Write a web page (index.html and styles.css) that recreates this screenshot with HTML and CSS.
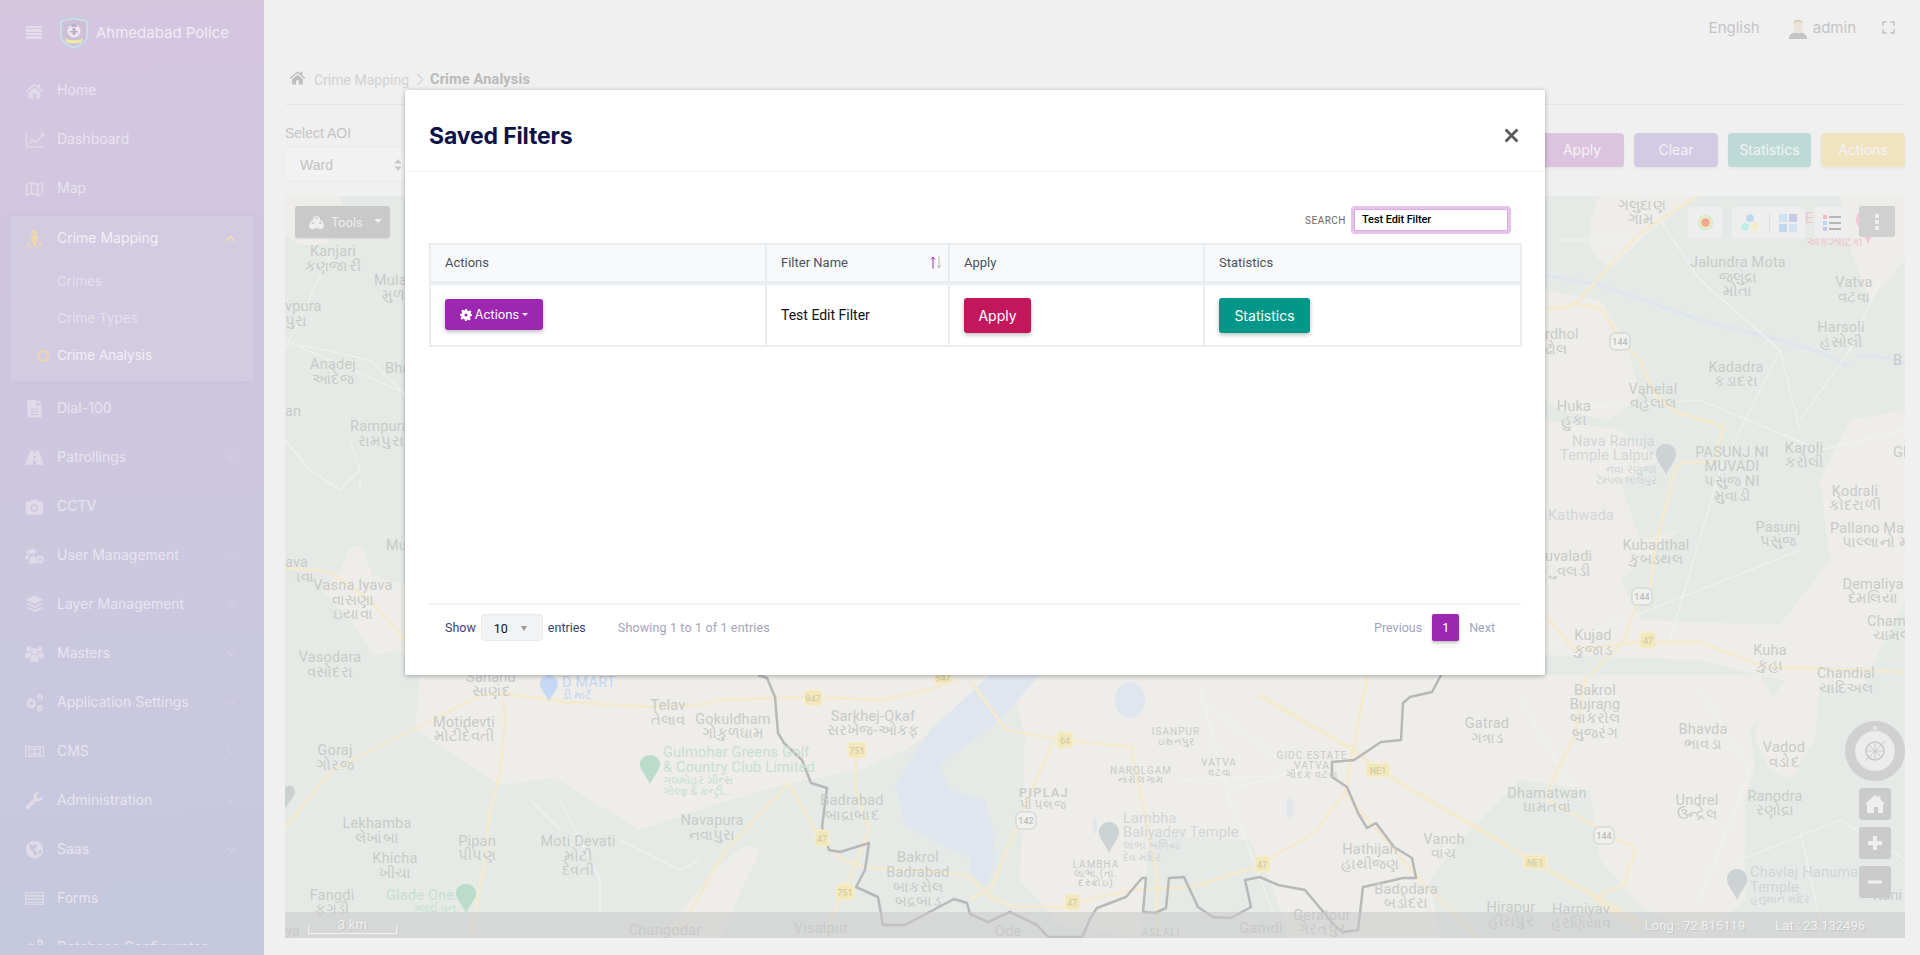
FILE: index.html
```html
<!DOCTYPE html>
<html lang="en">
<head>
<meta charset="utf-8">
<title>Crime Analysis</title>
<link rel="stylesheet" href="styles.css">
</head>
<body>
<svg class="sprite" aria-hidden="true">
  <symbol id="i-home" viewBox="0 0 24 24"><path d="M12 3 1 12.500l1.300 1.500L12 5.800l9.700 8.200 1.300-1.500-4-3.400V4h-3v2.600zM4.500 14.500V22h5.500v-6h4v6h5.500v-7.500L12 8.200z"/></symbol>
  <symbol id="i-chart" viewBox="0 0 24 24"><path d="M1 3h1.600v17.400H24V22H1z"/><path d="M4 17l6-6 4 3 7-8-2-1.500 5-1.500v6l-1.700-1.800L14 17l-4-3-5 5z"/></symbol>
  <symbol id="i-map" viewBox="0 0 24 24"><path d="M1 6l7-3 8 3 7-3v16l-7 3-8-3-7 3zM3 7.300v11.500l4-1.700V5.600zM9 5.600v11.500l6 2.200V7.800zM17 7.800v11.500l4-1.700V5.600z" fill-rule="evenodd"/></symbol>
  <symbol id="i-person" viewBox="0 0 24 24"><circle cx="12" cy="4" r="3"/><path d="M8 8h8v8h-2v5h-4v-5H8z"/><path d="M6 17.500c-3 .8-4.500 2-4.500 3 0 1.700 4.500 3 10.500 3s10.500-1.300 10.500-3c0-1-1.500-2.200-4.500-3v1.700c1.500.4 2.500 1 2.500 1.300 0 .8-3.500 2-8.500 2s-8.500-1.200-8.500-2c0-.3 1-.9 2.500-1.300z"/></symbol>
  <symbol id="i-file" viewBox="0 0 24 24"><path d="M3 1h11v7h7v15H3zM16 1l5 5h-5zM7 12v1.500h10V12zM7 15.500V17h10v-1.500zM7 19v1.500h10V19z" fill-rule="evenodd"/></symbol>
  <symbol id="i-road" viewBox="0 0 24 24"><path d="M7 3h4l-.2 4h2.400L13 3h4l7 18H14l-.3-5h-3.400L10 21H0zM10.600 10l-.2 3h3.200l-.2-3z" fill-rule="evenodd"/></symbol>
  <symbol id="i-camera" viewBox="0 0 24 24"><path d="M3 6h4l2-3h6l2 3h4a2 2 0 0 1 2 2v12a2 2 0 0 1-2 2H3a2 2 0 0 1-2-2V8a2 2 0 0 1 2-2zm9 3a5 5 0 1 0 0 10 5 5 0 0 0 0-10zm0 2a3 3 0 1 1 0 6 3 3 0 0 1 0-6z" fill-rule="evenodd"/></symbol>
  <symbol id="i-usercog" viewBox="0 0 24 24"><circle cx="4.500" cy="8" r="2.600"/><circle cx="10" cy="6.500" r="3.500"/><path d="M0 16c0-3 1.500-4.500 4-4.500h2C4.500 13 4 15 4 17H1a1 1 0 0 1-1-1zM5.500 20c0-5 2-7.500 5-7.500 1.400 0 2.600.6 3.500 1.500-.5 2-.5 4 .5 8h-8a1 1 0 0 1-1-2z"/><path d="M19 11l1.200 1.800 2-.4.4 2 1.400 1.100-1 1.500 1 1.500-1.400 1.100-.4 2-2-.4L19 23l-1.200-1.800-2 .4-.4-2-1.400-1.100 1-1.500-1-1.500 1.400-1.100.4-2 2 .4zm0 4a2 2 0 1 0 0 4 2 2 0 0 0 0-4z" fill-rule="evenodd"/></symbol>
  <symbol id="i-layers" viewBox="0 0 24 24"><path d="M12 1l11 5-11 5L1 6z"/><path d="M3.500 10 12 14l8.500-4 2.500 1.300L12 16.500 1 11.300z"/><path d="M3.500 15 12 19l8.500-4 2.500 1.300L12 21.500 1 16.300z"/></symbol>
  <symbol id="i-users" viewBox="0 0 24 24"><circle cx="5" cy="6" r="3.200"/><circle cx="19" cy="6" r="3.200"/><circle cx="12" cy="9" r="4"/><path d="M0 15c0-3 1.500-4.500 3.500-4.500h3c.4 1.500 1 2.300 2 3.200C6.500 15 5.500 16.500 5 18H1.500C.5 18 0 17 0 15zM24 15c0-3-1.500-4.500-3.500-4.500h-3c-.4 1.500-1 2.300-2 3.200 2 1.300 3 2.800 3.500 4.300h3.500c1 0 1.500-1 1.500-3zM6.500 20c0-3.500 2-6 4-6h3c2 0 4 2.500 4 6 0 1.500-1 2.500-2.500 2.500H9c-1.500 0-2.500-1-2.500-2.500z"/></symbol>
  <symbol id="i-cogs" viewBox="0 0 24 24"><path d="M8 6l1.400 2 2.300-.5.500 2.300 2 1.400-1.200 2 1.200 2-2 1.400-.5 2.300-2.300-.5L8 20l-1.400-2-2.300.5-.5-2.300-2-1.400 1.200-2-1.200-2 2-1.400.5-2.300 2.300.5zm0 4.500a2.500 2.500 0 1 0 0 5 2.500 2.500 0 0 0 0-5z" fill-rule="evenodd"/><path d="M19 1l.8 1.300 1.600-.3.300 1.600 1.300.9-.8 1.300.8 1.300-1.300.9-.3 1.600-1.600-.3L19 9.600l-.8-1.300-1.600.3-.3-1.600L15 6.100l.8-1.300L15 3.500l1.300-.9.300-1.600 1.600.3zm0 3.800a1.500 1.500 0 1 0 0 3 1.500 1.500 0 0 0 0-3zM19 14.400l.8 1.300 1.600-.3.300 1.600 1.300.9-.8 1.300.8 1.300-1.300.9-.3 1.600-1.600-.3L19 24l-.8-1.300-1.600.3-.3-1.600-1.300-.9.8-1.300-.8-1.300 1.300-.9.3-1.600 1.600.3zm0 3.800a1.500 1.500 0 1 0 0 3 1.500 1.500 0 0 0 0-3z" fill-rule="evenodd"/></symbol>
  <symbol id="i-news" viewBox="0 0 24 24"><path d="M0 5h24v14H0zM1.500 6.500v11h21v-11zM4 8h16v8H4zM5.500 9.500v5H11v-5zM13 9.500v5h5.500v-5z" fill-rule="evenodd"/></symbol>
  <symbol id="i-wrench" viewBox="0 0 24 24"><path d="M23 6.500a6.500 6.500 0 0 1-8.700 6.100L5 22a2.500 2.500 0 0 1-3.500 0 2.500 2.500 0 0 1 0-3.500l9.400-9.400A6.500 6.500 0 0 1 18.500 1L14.500 5l1 3.500 3.500 1 4-4z"/></symbol>
  <symbol id="i-globe" viewBox="0 0 24 24"><path d="M12 1a11 11 0 1 0 0 22 11 11 0 0 0 0-22zM6 5l4 2 3-2 3 2-2 3-3 1 2 3 3 1-2 5-3-1V15l-3-2-2-3-1-2zM19 12l2 1-1 4-2 1-1-3z" fill-rule="evenodd"/></symbol>
  <symbol id="i-list" viewBox="0 0 24 24"><path d="M0 4h24v16H0zM1.500 5.500V8h21V5.500zM1.500 9.500V12h21V9.500zM1.500 13.500V16h21v-2.500zM1.500 17.500v1h21v-1z" fill-rule="evenodd"/></symbol>
  <symbol id="i-cubes" viewBox="0 0 24 24"><path d="M12 1l5.500 2.500v5L22 10.500 23.500 16v4.500L18 23l-6-2.700L6 23 .5 20.500V16L2 10.500l4.500-2v-5zM12 3.300 8.500 4.800 12 6.300l3.500-1.500zM6 11.200 2.500 12.700 6 14.200l3.500-1.500zM18 11.200l-3.500 1.500 3.500 1.500 3.500-1.500z" fill-rule="evenodd"/></symbol>
  <symbol id="i-gear" viewBox="0 0 24 24"><path d="M10 0h4l.8 3.500 2.400 1 3-2 2.800 2.800-2 3 1 2.400L24 10v4l-3.500.8-1 2.400 2 3-2.800 2.800-3-2-2.400 1L14 24h-4l-.8-3.500-2.400-1-3 2L1 18.700l2-3-1-2.400L0 14v-4l3.500-.8 1-2.400-2-3L5.300 1l3 2 2.400-1zm2 9a3 3 0 1 0 0 6 3 3 0 0 0 0-6z" fill-rule="evenodd"/></symbol>
  <symbol id="i-chev-up" viewBox="0 0 12 8"><path d="M1 6.500 6 1.500l5 5" fill="none" stroke="currentColor" stroke-width="2"/></symbol>
  <symbol id="i-chev-down" viewBox="0 0 12 8"><path d="M1 1.500 6 6.500l5-5" fill="none" stroke="currentColor" stroke-width="1.500"/></symbol>
</svg>

<div class="app">
  <aside class="sidebar">
    <div class="brand">
      <div class="burger"><span></span><span></span><span></span><span></span></div>
      <svg class="logo" viewBox="0 0 32 34">
        <path d="M1.500 4 16 1l14.500 3V20c0 6-7 10.500-14.500 13C8.500 30.500 1.500 26 1.500 20z" fill="#cfdbe8" stroke="#b9cfe0"/>
        <path d="M4 6 16 3.500 28 6v14c0 4.500-6 8-12 10.500C10 28 4 24.500 4 20z" fill="#cdbfd8"/>
        <circle cx="16" cy="15" r="6.500" fill="#ece9f0"/>
        <path d="M14 8h4l1 3h-6zM14.500 12h3v7h-3zM12 15h8v1.500h-8z" fill="#bcaec8"/>
        <path d="M7 22c4 3 14 3 18 0l-1 4c-4 2-12 2-16 0z" fill="#eee8a8"/>
      </svg>
      <div class="brand-name">Ahmedabad Police</div>
    </div>
    <nav class="nav">
      <a class="item"><svg class="ic"><use href="#i-home"/></svg><span>Home</span></a>
      <a class="item"><svg class="ic"><use href="#i-chart"/></svg><span>Dashboard</span></a>
      <a class="item"><svg class="ic"><use href="#i-map"/></svg><span>Map</span></a>
      <div class="group">
        <a class="item open"><svg class="ic accent"><use href="#i-person"/></svg><span>Crime Mapping</span><svg class="chev up"><use href="#i-chev-up"/></svg></a>
        <a class="sub">Crimes</a>
        <a class="sub">Crime Types</a>
        <a class="sub current">Crime Analysis</a>
      </div>
      <a class="item"><svg class="ic"><use href="#i-file"/></svg><span>Dial-100</span></a>
      <a class="item"><svg class="ic"><use href="#i-road"/></svg><span>Patrollings</span><svg class="chev"><use href="#i-chev-down"/></svg></a>
      <a class="item"><svg class="ic"><use href="#i-camera"/></svg><span>CCTV</span></a>
      <a class="item"><svg class="ic"><use href="#i-usercog"/></svg><span>User Management</span><svg class="chev"><use href="#i-chev-down"/></svg></a>
      <a class="item"><svg class="ic"><use href="#i-layers"/></svg><span>Layer Management</span><svg class="chev"><use href="#i-chev-down"/></svg></a>
      <a class="item"><svg class="ic"><use href="#i-users"/></svg><span>Masters</span><svg class="chev"><use href="#i-chev-down"/></svg></a>
      <a class="item"><svg class="ic"><use href="#i-cogs"/></svg><span>Application Settings</span><svg class="chev"><use href="#i-chev-down"/></svg></a>
      <a class="item"><svg class="ic"><use href="#i-news"/></svg><span>CMS</span><svg class="chev"><use href="#i-chev-down"/></svg></a>
      <a class="item"><svg class="ic"><use href="#i-wrench"/></svg><span>Administration</span><svg class="chev"><use href="#i-chev-down"/></svg></a>
      <a class="item"><svg class="ic"><use href="#i-globe"/></svg><span>Saas</span><svg class="chev"><use href="#i-chev-down"/></svg></a>
      <a class="item"><svg class="ic"><use href="#i-list"/></svg><span>Forms</span></a>
      <a class="item"><svg class="ic"><use href="#i-cogs"/></svg><span>Database Configurator</span></a>
    </nav>
  </aside>

  <div class="main">
    <header class="topbar">
      <span class="lang">English</span>
      <span class="user">
        <svg class="avatar" viewBox="0 0 22 24"><path d="M1 24c0-5 4-7 10-7s10 2 10 7z" fill="#c4c4c4"/><path d="M6 6c0-4 10-4 10 0v5c0 4-3 7-5 7s-5-3-5-7z" fill="#ece4d8"/><path d="M6 7c-.5-5 10.500-6 10 0-2-2-8-2-10 0z" fill="#d8ccb8"/></svg>
        admin
      </span>
      <svg class="fullscreen" viewBox="0 0 14 14"><path d="M1 5V1h4M9 1h4v4M13 9v4H9M5 13H1V9" fill="none" stroke="#c2c2c2" stroke-width="1.600"/></svg>
    </header>

    <div class="crumbs">
      <svg class="crumb-home"><use href="#i-home"/></svg>
      <span class="crumb">Crime Mapping</span>
      <svg class="crumb-sep" viewBox="0 0 8 14"><path d="M1 1l6 6-6 6" fill="none" stroke="#d0d0d0" stroke-width="1.200"/></svg>
      <strong class="crumb-now">Crime Analysis</strong>
    </div>

    <div class="filters">
      <div class="aoi">
        <label class="aoi-label">Select AOI</label>
        <div class="aoi-select">Ward<svg class="updown" viewBox="0 0 8 13"><path d="M4 0l4 5H0zM4 13 0 8h8z" fill="#c8c8c8"/></svg></div>
      </div>
      <div class="actions">
        <button class="act a-apply">Apply</button>
        <button class="act a-clear">Clear</button>
        <button class="act a-stats">Statistics</button>
        <button class="act a-actions">Actions</button>
      </div>
    </div>

    <section class="map">
      <svg class="basemap" viewBox="285 196 1620 742" preserveAspectRatio="none">
        <rect x="285" y="196" width="1620" height="742" fill="#e5eae6"/>
        <g class="land">
          <polygon points="285,196 340,196 345,225 325,245 300,245 285,235"/>
          <polygon points="340,570 350,548 362,545 372,575 405,585 450,680 430,690 400,650 375,655 350,620 322,590"/>
          <polygon points="420,675 415,730 500,785 555,778 640,830 720,803 790,783 860,770 905,750 1020,675"/>
          <polygon points="760,850 744,845 715,870 660,938 720,938"/>
          <polygon points="1010,675 1760,675 1775,700 1750,730 1755,765 1745,800 1745,900 1700,938 1640,905 1600,860 1590,790 1520,780 1460,840 1430,880 1440,938 1290,938 1270,880 1250,840 1150,835 1140,938 1060,925 1020,880 1025,740"/>
          <polygon points="1785,680 1820,680 1815,740 1790,780 1770,770 1755,740 1760,715"/>
          <polygon points="1600,196 1697,196 1640,240 1610,270 1590,250 1590,220"/>
          <polygon points="1545,290 1600,300 1625,340 1640,395 1610,420 1560,410 1545,400"/>
          <polygon points="1545,420 1620,430 1660,460 1620,480 1640,540 1680,530 1620,580 1640,620 1780,625 1830,560 1820,480 1850,420 1905,410 1905,600 1860,690 1780,680 1700,660 1545,655"/>
          <polygon points="1840,196 1905,196 1905,260 1870,300 1850,250"/>
        </g>
        <g class="water">
          <polygon points="990,675 930,730 895,785 905,825 950,850 990,865 985,800 950,790 940,765 1000,720 1040,675"/>
          <polygon points="970,810 990,815 997,860 985,885 970,878"/>
          <ellipse cx="1130" cy="700" rx="15" ry="18"/>
          <ellipse cx="1290" cy="808" rx="4" ry="10"/>
          <ellipse cx="1095" cy="826" rx="2" ry="8"/>
        </g>
        <path class="canal" d="M1545 275 1600 285 1700 320 1780 340 1820 352 1845 365 1850 362M1858 355 1890 358 1905 365"/>
        <g class="minor">
          <path d="M285 340 420 400M333 250 285 350M300 345 370 360 405 395M350 440 360 470 340 490 310 470 285 440M360 480 360 490"/>
          <path d="M560 800 600 880 600 938M620 840 680 870 700 860M530 800 560 830M1640 190 1700 280 1780 350 1800 430M1780 350 1720 470 1670 640M1560 240 1640 240M1560 410 1700 400 1820 450 1905 430M1800 420 1850 350 1880 280M1545 650 1700 590 1800 550"/>
          <path d="M1200 700 1300 775 1180 780M1200 690 1230 800 1280 930M1330 760 1230 790M1520 700 1580 800M1700 690 1750 770 1700 900M1740 860 1840 820 1905 860M1800 830 1820 920"/>
        </g>
        <g class="road">
          <path d="M1697 196 1640 233 1577 302 1563 308 1540 309M1575 304 1600 308 1615 330 1620 340 1640 360 1655 395 1675 412 1720 425 1724 428 1718 445 1715 462 1683 462 1675 470 1665 510 1655 545 1650 590 1642 596 1630 620 1625 640M1545 615 1575 650 1640 642 1700 642 1760 665 1770 667 1905 672"/>
          <path d="M1553 780 1575 735 1585 680 1625 640M1553 780 1547 800 1570 812 1592 825 1604 835 1632 845 1635 855 1628 870 1625 885 1605 892 1595 900 1640 930"/>
          <path d="M503 700 505 720 500 775 490 810 485 860 470 938M285 828 329 773 356 758 432 720 481 695 508 694 565 702 650 707 700 705 720 700 810 697 880 700 920 692 960 680M285 568 330 572 370 600 405 640"/>
          <path d="M789 783 816 833 842 860 865 867 950 873 970 877 992 898 1015 907 1064 907 1095 898 1131 890 1193 887 1255 867 1314 833 1345 793 1365 687 1367 675M789 783 726 850 677 933M856 750 856 793 869 830 847 883 825 933M970 680 1006 730 1064 740 1131 747 1146 820 1157 877 1157 937M1055 737 1019 820 992 887 970 900M1345 793 1420 880 1480 938"/>
        </g>
        <path class="highway" d="M1258 695 1354 750 1378 770 1535 862 1645 925"/>
        <path class="border" d="M758 675 767 678 775 697 778 733 784 743 802 760 811 783 827 788 822 827 829 850 840 852 869 843 865 870 856 887 878 897 883 925 905 925 954 899 967 903 970 914 988 922 1010 912 1037 925 1048 937 1070 937 1082 937 1091 917 1097 908 1126 897 1142 878 1146 878 1143 912 1155 913 1166 908 1169 878 1184 877 1198 907 1213 917 1231 918 1251 907 1245 880 1260 877 1278 885 1305 890 1336 927 1343 932 1358 930 1363 887 1381 883 1403 878 1416 878 1412 858 1394 847 1376 823 1367 828 1358 813 1347 787 1332 777 1332 762 1354 760 1381 742 1401 740 1403 703 1410 697 1432 692 1441 675"/>

        <g class="shields">
          <g><rect x="804" y="690" width="18" height="16" rx="3"/><text x="813" y="702">947</text></g>
          <g><rect x="934" y="670" width="18" height="14" rx="3"/><text x="943" y="681">947</text></g>
          <g><rect x="848" y="742" width="18" height="16" rx="3"/><text x="857" y="754">751</text></g>
          <g><rect x="836" y="884" width="18" height="16" rx="3"/><text x="845" y="896">751</text></g>
          <g><rect x="815" y="830" width="14" height="16" rx="3"/><text x="822" y="842">47</text></g>
          <g><rect x="1057" y="732" width="16" height="16" rx="3"/><text x="1065" y="744">64</text></g>
          <g><rect x="1065" y="894" width="15" height="16" rx="3"/><text x="1072" y="906">47</text></g>
          <g><rect x="1255" y="856" width="15" height="16" rx="3"/><text x="1262" y="868">47</text></g>
          <g><rect x="1366" y="763" width="24" height="14" rx="3"/><text x="1378" y="774">NE1</text></g>
          <g><rect x="1523" y="855" width="24" height="14" rx="3"/><text x="1535" y="866">NE1</text></g>
          <g><rect x="1640" y="632" width="16" height="16" rx="3"/><text x="1648" y="644">47</text></g>
        </g>
        <g class="shields state">
          <g><rect x="1016" y="812" width="20" height="17" rx="5"/><text x="1026" y="824">142</text></g>
          <g><rect x="1594" y="827" width="20" height="17" rx="5"/><text x="1604" y="839">144</text></g>
          <g><rect x="1610" y="333" width="20" height="17" rx="5"/><text x="1620" y="345">144</text></g>
          <g><rect x="1632" y="588" width="20" height="17" rx="5"/><text x="1642" y="600">144</text></g>
        </g>

        <g class="pins">
          <path class="pin-grey" d="M285 787c5-3 10 0 10 5 0 4-5 9-10 16z"/>
          <path class="pin-blue" d="M549 675a9 9 0 0 1 9 9c0 4-5 10-9 17-4-7-9-13-9-17a9 9 0 0 1 9-9z"/>
          <path class="pin-green" d="M650 755a9.500 9.500 0 0 1 10 10c0 4-6 11-10 19-4-8-10-15-10-19a9.500 9.500 0 0 1 10-10z"/>
          <path class="pin-green" d="M466 884a9.500 9.500 0 0 1 10 10c0 4-6 11-10 19-4-8-10-15-10-19a9.500 9.500 0 0 1 10-10z"/>
          <path class="pin-grey2" d="M1109 822a10 10 0 0 1 10 11c0 5-6 11-10 20-4-9-10-15-10-20a10 10 0 0 1 10-11z"/>
          <path class="pin-grey2" d="M1666 444a10 10 0 0 1 10 11c0 5-6 11-10 20-4-9-10-15-10-20a10 10 0 0 1 10-11z"/>
          <path class="pin-grey2" d="M1737 869a10 10 0 0 1 10 11c0 5-6 11-10 20-4-9-10-15-10-20a10 10 0 0 1 10-11z"/>
          <path class="pin-pink" d="M1868 208a12 12 0 0 1 12 12c0 6-8 14-12 24-4-10-12-18-12-24a12 12 0 0 1 12-12z"/>
        </g>

        <g class="lb">
          <text x="333" y="256">Kanjari</text><text x="333" y="271">કણજારી</text>
          <text x="333" y="369">Anadej</text><text x="333" y="384">આંદેજ</text>
          <text x="353" y="590">Vasna Iyava</text><text x="353" y="605">વાસણા</text><text x="353" y="619">ઇયાવા</text>
          <text x="330" y="662">Vasodara</text><text x="330" y="677">વસોદરા</text>
          <text x="335" y="755">Goraj</text><text x="335" y="770">ગોરજ</text>
          <text x="377" y="828">Lekhamba</text><text x="377" y="843">લેખાંબા</text>
          <text x="395" y="863">Khicha</text><text x="395" y="878">ખીચા</text>
          <text x="332" y="900">Fangdi</text><text x="332" y="914">ફંગડી</text>
          <text x="491" y="682">Sanand</text><text x="491" y="696">સાણંદ</text>
          <text x="668" y="710">Telav</text><text x="668" y="725">તેલાવ</text>
          <text x="733" y="724">Gokuldham</text><text x="733" y="738">ગોકુળધામ</text>
          <text x="873" y="721">Sarkhej-Okaf</text><text x="873" y="735">સરખેજ-ઓકફ</text>
          <text x="464" y="727">Motidevti</text><text x="464" y="741">મોટીદેવતી</text>
          <text x="852" y="805">Badrabad</text><text x="852" y="820">બાદ્રાબાદ</text>
          <text x="712" y="825">Navapura</text><text x="712" y="840">નવાપુરા</text>
          <text x="477" y="846">Pipan</text><text x="477" y="860">પીપણ</text>
          <text x="578" y="846">Moti Devati</text><text x="578" y="861">મોટી</text><text x="578" y="875">દેવતી</text>
          <text x="918" y="862">Bakrol</text><text x="918" y="877">Badrabad</text><text x="918" y="892">બાકરોલ</text><text x="918" y="906">બદ્રબાડ</text>
          <text x="665" y="935">Changodar</text><text x="821" y="933">Visalpur</text>
          <text x="1370" y="854">Hathijan</text><text x="1370" y="869">હાથીજણ</text>
          <text x="1444" y="844">Vanch</text><text x="1444" y="858">વાંચ</text>
          <text x="1406" y="894">Badodara</text><text x="1406" y="908">બડોદરા</text>
          <text x="1487" y="728">Gatrad</text><text x="1487" y="743">ગત્રાડ</text>
          <text x="1595" y="695">Bakrol</text><text x="1595" y="709">Bujrang</text><text x="1595" y="723">બાકરોલ</text><text x="1595" y="738">બુજરંગ</text>
          <text x="1547" y="798">Dhamatwan</text><text x="1547" y="812">ધામતવાં</text>
          <text x="1511" y="912">Hirapur</text><text x="1511" y="926">હીરાપુર</text>
          <text x="1581" y="914">Harniyav</text><text x="1581" y="928">હરણિયાવ</text>
          <text x="1322" y="920">Geratpur</text><text x="1322" y="934">ગેરતપુર</text>
          <text x="1261" y="933">Gamdi</text><text x="1008" y="936">Ode</text>
          <text x="1703" y="734">Bhavda</text><text x="1703" y="749">ભાવડા</text>
          <text x="1784" y="752">Vadod</text><text x="1784" y="767">વડોદ</text>
          <text x="1697" y="805">Undrel</text><text x="1697" y="819">ઉન્દ્રેલ</text>
          <text x="1775" y="801">Ranodra</text><text x="1775" y="815">રણોદ્રા</text>
          <text x="1846" y="678">Chandial</text><text x="1846" y="693">ચાંદિઅલ</text>
          <text x="1642" y="210">ગલુદાણ</text><text x="1641" y="224">ગામ</text>
          <text x="1738" y="267">Jalundra Mota</text><text x="1738" y="282">જલુંદ્રા</text><text x="1738" y="296">મોતા</text>
          <text x="1854" y="287">Vatva</text><text x="1854" y="302">વટવા</text>
          <text x="1841" y="332">Harsoli</text><text x="1841" y="347">હસોલી</text>
          <text x="1736" y="372">Kadadra</text><text x="1736" y="386">કડાદરા</text>
          <text x="1653" y="394">Vahelal</text><text x="1653" y="408">વહેલાલ</text>
          <text x="1574" y="411">Huka</text><text x="1574" y="425">હુકા</text>
          <text x="1732" y="457">PASUNJ NI</text><text x="1732" y="471">MUVADI</text><text x="1732" y="486">પસુંજ NI</text><text x="1732" y="501">મુવાડી</text>
          <text x="1804" y="453">Karoli</text><text x="1804" y="467">કરોલી</text>
          <text x="1855" y="496">Kodrali</text><text x="1855" y="510">કોદરાળી</text>
          <text x="1778" y="532">Pasunj</text><text x="1778" y="546">પસુંજ</text>
          <text x="1656" y="550">Kubadthal</text><text x="1656" y="564">કુબડથલ</text>
          <text x="1873" y="589">Demaliya</text><text x="1873" y="603">દેમલિયા</text>
          <text x="1593" y="640">Kujad</text><text x="1593" y="655">કુજાડ</text>
          <text x="1770" y="655">Kuha</text><text x="1770" y="670">કુહા</text>
        </g>
        <g class="ls">
          <text x="374" y="285">Mula</text><text x="382" y="300">મુળા</text>
          <text x="285" y="311">vpura</text><text x="285" y="326">પુરા</text>
          <text x="385" y="373">Bha</text><text x="285" y="416">an</text>
          <text x="350" y="431">Rampura</text><text x="358" y="446">રામપુરા</text>
          <text x="386" y="550">Mu</text><text x="285" y="567">ava</text><text x="285" y="582">ાવા</text>
          <text x="285" y="936">ya</text>
          <text x="1545" y="339">rdhol</text><text x="1545" y="354">ઢોલ</text>
          <text x="1893" y="365">B</text><text x="1893" y="457">Gh</text>
          <text x="1830" y="533">Pallano Mat</text><text x="1842" y="547">પાલ્લાનો મઠ</text>
          <text x="1545" y="561">uvaladi</text><text x="1545" y="576">ુવલડી</text>
          <text x="1867" y="626">Cham</text><text x="1873" y="640">ચામલ</text>
          <text x="1873" y="900">Kani</text>
        </g>
        <g class="ls small">
          <text x="1141" y="774" class="mid">NAROLGAM</text><text x="1141" y="783" class="mid">નારોલગામ</text>
          <text x="1176" y="735" class="mid">ISANPUR</text><text x="1176" y="745" class="mid">ઇસનપુર</text>
          <text x="1219" y="766" class="mid">VATVA</text><text x="1219" y="776" class="mid">વટવા</text>
          <text x="1312" y="759" class="mid">GIDC ESTATE</text><text x="1312" y="769" class="mid">VATVA</text><text x="1312" y="778" class="mid">ગીદક વટવા</text>
          <text x="1096" y="868" class="mid">LAMBHA</text><text x="1096" y="877" class="mid">લાંભા (તા.</text><text x="1096" y="886" class="mid">દસ્ક્રોઇ)</text>
          <text x="1161" y="936" class="mid">ASLALI</text>
        </g>
        <g class="ls wide">
          <text x="1044" y="797" class="mid">PIPLAJ</text><text x="1044" y="809" class="mid">પીપલજ</text>
        </g>
        <g class="ls poi">
          <text x="1123" y="823">Lambha</text><text x="1123" y="837">Baliyadev Temple</text>
          <text x="1123" y="849" class="tiny">લાંભા બળિયા</text><text x="1123" y="861" class="tiny">દેવ મંદિર</text>
          <text x="1750" y="877">Chavlaj Hanuman</text><text x="1750" y="892">Temple</text><text x="1750" y="903" class="tiny">હનુમાન મંદિર</text>
          <text x="1572" y="446">Nava Ranuja</text><text x="1560" y="460">Temple Lalpur</text>
          <text x="1606" y="473" class="tiny">નવા રણુજા</text><text x="1596" y="484" class="tiny">ટેમ્પલ લાલપુર</text>
          <text x="1548" y="520">Kathwada</text>
        </g>
        <g class="ls golf">
          <text x="663" y="757">Gulmohar Greens Golf</text><text x="663" y="772">&amp; Country Club Limited</text>
          <text x="663" y="784" class="tiny">ગલમોહર ગ્રીન્સ</text><text x="663" y="795" class="tiny">ગોલ્ફ &amp; કન્ટ્રી...</text>
          <text x="386" y="900">Glade One</text><text x="414" y="912" class="tiny">ગ્લાઈ વન</text>
        </g>
        <g class="ls mart">
          <text x="562" y="687">D MART</text><text x="562" y="699" class="tiny">ડી માર્ટ</text>
        </g>
        <g class="ls exo">
          <text x="1805" y="223">Ex</text><text x="1807" y="246" class="tiny2">એક્ઝોટિકા</text>
        </g>
      </svg>

      <div class="tools"><svg class="tools-ic"><use href="#i-cubes"/></svg><span>Tools</span><i class="caret"></i></div>

      <div class="map-tools">
        <div class="tile t-heat">
          <svg viewBox="0 0 18 18"><circle cx="9" cy="9" r="8.500" fill="#d3ecd4"/><circle cx="9" cy="9" r="6.500" fill="#f0ecb4"/><circle cx="9" cy="9" r="4.500" fill="#f0a79a"/></svg>
        </div>
        <div class="tile t-pair">
          <svg class="hex" viewBox="0 0 20 20"><polygon points="10,1 14,3 14,8 10,10 6,8 6,3" fill="#bcdcec"/><polygon points="5,10 9,12 9,17 5,19 1,17 1,12" fill="#bcefe5"/><polygon points="15,10 19,12 19,17 15,19 11,17 11,12" fill="#f1eec4"/></svg>
          <span class="sep"></span>
          <svg class="grid4" viewBox="0 0 18 18"><rect width="8" height="8" fill="#d0e2ef"/><rect x="10" width="8" height="8" fill="#c7cbe6"/><rect y="10" width="8" height="8" fill="#c3d7ef"/><rect x="10" y="10" width="8" height="8" fill="#d3e4ef"/></svg>
        </div>
        <div class="tile t-list">
          <svg viewBox="0 0 18 16"><rect width="4" height="4" fill="#f6b9b9"/><rect y="6" width="4" height="4" fill="#b9d7ee"/><rect y="12" width="4" height="4" fill="#c9c5ee"/><path d="M6 2h12M6 8h12M6 14h12" stroke="#b5b5b5" stroke-width="1.800"/></svg>
        </div>
        <div class="kebab"><i></i><i></i><i></i></div>
      </div>

      <div class="map-nav">
        <svg class="compass" viewBox="0 0 60 60">
          <circle cx="30" cy="30" r="25" fill="none" stroke="#d0d0d0" stroke-width="10"/>
          <circle cx="30" cy="30" r="19" fill="#ececec"/>
          <circle cx="30" cy="30" r="9" fill="none" stroke="#c9c9c9" stroke-width="1.500"/>
          <path d="M20 40 40 20M23 23 37 37M30 22v16M22 30h16" stroke="#c9c9c9" stroke-width="1"/>
          <text x="30" y="9" class="n">N</text>
        </svg>
        <button class="nav-btn"><svg viewBox="0 0 20 18"><path d="M10 0l3 2.500V1h2.500v3.500L20 9h-2v9h-5v-6H9v6H2V9H0z" fill="#efefef"/></svg></button>
        <button class="nav-btn"><svg viewBox="0 0 14 14"><path d="M5 0h4v5h5v4H9v5H5V9H0V5h5z" fill="#efefef"/></svg></button>
        <button class="nav-btn"><svg viewBox="0 0 14 14"><path d="M0 5.500h14v3H0z" fill="#efefef"/></svg></button>
      </div>

      <div class="status">
        <div class="scale">3 km</div>
        <div class="coords"><span>Long : 72.815119</span><span>Lat : 23.132496</span></div>
      </div>
    </section>
  </div>
</div>

<div class="modal" role="dialog">
  <div class="modal-head">
    <h2 class="modal-title">Saved Filters</h2>
    <svg class="close" viewBox="0 0 14 14"><path d="M1.500 1.500l11 11M12.500 1.500l-11 11" stroke="#5a5a5a" stroke-width="2.600" fill="none"/></svg>
  </div>
  <div class="modal-body">
    <div class="search-row">
      <span class="search-label">SEARCH</span>
      <div class="search-input">Test Edit Filter</div>
    </div>
    <table class="table">
      <colgroup><col class="c1"><col class="c2"><col class="c3"><col class="c4"></colgroup>
      <thead>
        <tr>
          <th>Actions</th>
          <th><div class="th-sort">Filter Name<svg class="sort" viewBox="0 0 12 13"><path d="M3 12.500V1M1 3.500 3 1l2 2.500" fill="none" stroke="#a92bb8" stroke-width="1"/><path d="M9 .5V12M7 9.500 9 12l2-2.500" fill="none" stroke="#b5b5b5" stroke-width="1"/></svg></div></th>
          <th>Apply</th>
          <th>Statistics</th>
        </tr>
      </thead>
      <tbody>
        <tr>
          <td><button class="btn btn-actions"><svg class="gear"><use href="#i-gear"/></svg>Actions<i class="caret small"></i></button></td>
          <td>Test Edit Filter</td>
          <td><button class="btn btn-apply">Apply</button></td>
          <td><button class="btn btn-stats">Statistics</button></td>
        </tr>
      </tbody>
    </table>
    <div class="table-foot">
      <div class="foot-left">
        <span class="show">Show</span>
        <div class="len">10<i class="len-arrow"></i></div>
        <span class="show">entries</span>
        <span class="info">Showing 1 to 1 of 1 entries</span>
      </div>
      <div class="pager">
        <span class="pg">Previous</span>
        <span class="pg-cur">1</span>
        <span class="pg">Next</span>
      </div>
    </div>
  </div>
</div>
</body>
</html>
```
FILE: styles.css
```css
* { box-sizing: border-box; }
html, body { margin: 0; height: 955px; overflow: hidden; }
body { background: #f0f0f0; font-family: Inter, "Liberation Sans", sans-serif; position: relative; }
.sprite { display: none; }
button { font: inherit; border: 0; cursor: pointer; }
a { display: flex; }

.app { display: flex; height: 955px; }

/* sidebar */
.sidebar { width: 264px; flex: none; height: 955px; background: linear-gradient(178deg, #d5c6e0 0%, #cfc6e0 35%, #cbc8df 60%, #c5c8dd 100%); color: #e9e4ef; }
.brand { height: 64px; display: flex; align-items: center; padding-left: 26px; }
.burger { width: 16px; display: flex; flex-direction: column; gap: 1px; margin-right: 16px; }
.burger span { height: 2.500px; background: #e3dcea; }
.logo { width: 32px; height: 34px; margin-right: 6px; margin-top: 1px; }
.brand-name { font-size: 15px; color: #f0ecf4; white-space: nowrap; }
.nav { height: 881px; overflow: hidden; padding-top: 2px; }
.item { height: 49px; align-items: center; padding-left: 25px; padding-right: 28px; font-size: 14px; color: #e9e4ef; white-space: nowrap; }
.item span { flex: 1; margin-left: 13px; position: relative; top: -1px; }
.ic { width: 19px; height: 19px; fill: #e1dbe9; flex: none; }
.ic.accent { fill: #f0d8ac; }
.chev { width: 10px; height: 7px; color: #d5d0e2; flex: none; }
.chev.up { color: #f2dcb2; width: 11px; height: 8px; }
.group { margin: 3px 10px 2.500px; width: 244px; height: 165px; background: #d3cbe1; border-radius: 3px; box-shadow: 0 0 5px rgba(160,150,190,.12); }
.group .item { height: 45px; padding-left: 15px; padding-right: 18px; color: #f3eff6; }
.sub { height: 37px; align-items: center; padding-left: 47px; font-size: 13.500px; color: #e6e0ec; position: relative; top: 1px; }
.sub.current { color: #f3eff6; }
.sub.current::before { content: ""; position: absolute; left: 27px; top: 14px; width: 8px; height: 8px; border: 2px solid #f0d6a6; border-radius: 50%; }

/* main */
.main { flex: 1; min-width: 0; display: flex; flex-direction: column; padding: 0 15px 0 21px; position: relative; }
.topbar { height: 55px; margin: 0 -15px 0 -21px; display: flex; align-items: center; justify-content: flex-end; padding-right: 25px; background: #f0f0f0; box-shadow: 0 1px 3px rgba(0,0,0,.025); font-size: 15px; color: #c4c4c4; }
.lang { margin-right: 28px; }
.user { display: flex; align-items: center; gap: 5px; margin-right: 26px; }
.avatar { width: 20px; height: 24px; }
.fullscreen { width: 13px; height: 13px; }
.crumbs { height: 50px; display: flex; align-items: center; border-bottom: 1px solid #e6e6e6; padding: 0 0 0 4px; font-size: 13px; }
.crumb-home { width: 17px; height: 17px; fill: #bdbdbd; margin-top: -4px; }
.crumb { color: #d2d2d2; margin-left: 8px; font-family: Roboto, sans-serif; font-size: 14px; }
.crumb-sep { width: 8px; height: 13px; margin: 0 6px 0 7px; }
.crumb-now { color: #bababa; font-family: Roboto, sans-serif; font-size: 14.500px; font-weight: 700; letter-spacing: .15px; }
.filters { height: 91px; display: flex; justify-content: space-between; align-items: flex-start; }
.aoi { padding-top: 19px; width: 125px; }
.aoi-label { display: block; font-family: "Liberation Sans", sans-serif; font-size: 14px; line-height: 18px; color: #c4c4c4; margin-bottom: 6px; }
.aoi-select { height: 33px; background: #f2f2f2; border-radius: 4px; box-shadow: 0 0 3px rgba(0,0,0,.05); display: flex; align-items: center; justify-content: space-between; padding: 0 8px 0 15px; font-family: "Liberation Sans", sans-serif; font-size: 14px; color: #c2c2c2; }
.updown { width: 8px; height: 12px; }
.actions { display: flex; gap: 10px; padding-top: 28px; }
.act { height: 34px; border-radius: 4px; color: #f4f2f5; font-size: 14px; box-shadow: 0 2px 3px rgba(0,0,0,.04); padding: 0 0 2px; }
.a-apply { width: 84px; background: #dcc4de; }
.a-clear { width: 84px; background: #d3cae3; }
.a-stats { width: 83px; background: #bddad7; }
.a-actions { width: 84px; background: #f0e4bf; }

/* map */
.map { position: relative; width: 1620px; height: 742px; overflow: hidden; background: #e5eae6; }
.basemap { display: block; width: 1620px; height: 742px; font-family: Roboto, "Noto Sans", sans-serif; }
.land polygon { fill: #eeedea; }
.water polygon, .water ellipse { fill: #dfe6ee; }
.canal { fill: none; stroke: #dfe5ee; stroke-width: 3; }
.minor path { fill: none; stroke: #f1f3f0; stroke-width: 1.200; }
.road path { fill: none; stroke: #f3ead0; stroke-width: 3; stroke-linejoin: round; }
.highway { fill: none; stroke: #f3ead0; stroke-width: 4; }
.border { fill: none; stroke: #b8b8b8; stroke-width: 2.500; stroke-linejoin: round; }
.shields rect { fill: #f2e8bb; stroke: #f6f0d4; }
.shields text { font-size: 9px; text-anchor: middle; fill: #d3cea8; font-weight: 500; }
.shields.state rect { fill: #f0f0ee; stroke: #d6d9d4; stroke-width: 1.500; }
.shields.state text { fill: #bcbfbc; }
.pin-grey { fill: #cbd0d1; }
.pin-blue { fill: #c6d9f4; }
.pin-green { fill: #bcdccb; }
.pin-grey2 { fill: #cdd2d4; }
.pin-pink { fill: #f4c8d2; }
.lb text, .ls text { font-size: 14.500px; fill: #c8cac8; letter-spacing: .2px; }
.lb text { text-anchor: middle; }
.ls.small text { font-size: 10px; letter-spacing: 1px; }
.ls.wide text { font-size: 12.500px; letter-spacing: 1.400px; font-weight: 500; }
.ls text.mid { text-anchor: middle; }
.ls.poi text { fill: #d1d6d8; }
.ls.golf text { fill: #c6e0d3; }
.ls.mart text { fill: #c4d5f0; }
.ls.exo text { fill: #f3c5d0; }
.ls text.tiny { font-size: 10.500px; letter-spacing: 0; }
.ls text.tiny2 { font-size: 12px; letter-spacing: 0; }

.tools { position: absolute; left: 10px; top: 10px; width: 95px; height: 32px; background: #c9c9c9; border-radius: 3px; display: flex; align-items: center; padding-left: 14px; color: #eeeeee; font-size: 12.500px; box-shadow: 0 1px 2px rgba(0,0,0,.06); }
.tools-ic { width: 15px; height: 15px; fill: #efefef; margin-right: 7px; }
.caret { width: 0; height: 0; border: 4px solid transparent; border-top-color: #efefef; border-bottom: 0; margin-left: 11px; margin-top: -2px; }
.map-tools { position: absolute; top: 10px; right: 10px; display: flex; align-items: flex-start; }
.tile { height: 31px; background: #eeeeee; border-radius: 3px; display: flex; align-items: center; justify-content: center; }
.t-heat { width: 34px; margin: 1px 10px 0 0; }
.t-heat svg { width: 17px; height: 17px; }
.t-pair { width: 73px; margin: 1px 10px 0 0; gap: 9px; }
.hex { width: 20px; height: 19px; }
.sep { width: 1px; height: 19px; background: #dedede; }
.grid4 { width: 18px; height: 18px; }
.t-list { width: 34px; margin: 1px 10px 0 0; }
.t-list svg { width: 18px; height: 16px; }
.kebab { width: 36px; height: 31px; background: #d0d0d0; border-radius: 2px; display: flex; flex-direction: column; align-items: center; justify-content: center; gap: 2px; }
.kebab i { width: 4px; height: 4px; background: #eeeeee; }
.map-nav { position: absolute; right: 0; top: 525px; width: 60px; display: flex; flex-direction: column; align-items: center; gap: 7px; }
.compass { width: 60px; height: 60px; }
.compass .n { font-size: 5px; font-weight: 700; text-anchor: middle; fill: #f0f0f0; }
.nav-btn { width: 32px; height: 32px; background: #cbcbcb; border-radius: 3px; padding: 0; display: flex; align-items: center; justify-content: center; }
.nav-btn svg { width: 14px; height: 14px; }
.nav-btn:nth-of-type(1) svg { width: 20px; height: 18px; }
.status { position: absolute; left: 0; right: 0; bottom: 0; height: 26px; background: rgba(200,200,200,.55); display: flex; justify-content: space-between; align-items: center; padding-left: 23px; font-family: Roboto, sans-serif; font-size: 13px; color: #f2f2f2; text-shadow: 1px 1px 1px rgba(0,0,0,.1); }
.scale { width: 89px; height: 9px; margin-top: 8px; border: 1px solid #f2f2f2; border-top: 0; display: flex; justify-content: center; line-height: 0; letter-spacing: .2px; position: relative; }
.coords { display: flex; gap: 30px; padding-right: 40px; }

/* modal */
.modal { position: absolute; left: 405px; top: 90px; width: 1140px; height: 585px; background: #fff; border-radius: 2px; box-shadow: 0 1px 5px rgba(0,0,0,.3); font-family: Roboto, sans-serif; }
.modal-head { height: 82px; border-bottom: 1px solid #f4f4f4; display: flex; align-items: center; justify-content: space-between; padding: 10px 25px 0 24px; }
.modal-title { margin: 0; font-family: Inter, sans-serif; font-size: 23px; font-weight: 700; color: #0d1247; letter-spacing: -.15px; }
.close { width: 15px; height: 15px; margin-right: 1px; }
.modal-body { padding: 0 24px; }
.search-row { height: 71px; display: flex; justify-content: flex-end; align-items: flex-start; padding: 34px 10px 0 0; }
.search-label { font-size: 10px; letter-spacing: .5px; color: #6a6a6a; margin: 9px 5px 0 0; }
.search-input { width: 160px; height: 28px; border: 3px solid #e6c4ea; border-radius: 4px; box-shadow: inset 0 0 0 1px #dfa6e6; background: #fff; font-size: 11px; color: #000; font-weight: 500; padding: 0 0 0 8px; line-height: 22px; letter-spacing: -.1px; }
.table { width: 1091px; border-collapse: collapse; table-layout: fixed; }
.c1 { width: 336px; } .c2 { width: 183px; } .c3 { width: 255px; } .c4 { width: 317px; }
.table th, .table td { border: 2px solid #e9edf0; padding: 0 14px; text-align: left; }
.table th { height: 39px; background: #f8f9fb; font-weight: 400; font-size: 13px; color: #4a525c; border-bottom-width: 4px; padding-bottom: 2px; }
.table td { height: 63px; font-size: 14px; color: #111; }
.th-sort { display: flex; justify-content: space-between; align-items: center; margin-right: -8px; }
.sort { width: 12px; height: 13px; }
.btn { color: #fff; border-radius: 3px; font-family: Inter, sans-serif; box-shadow: 0 2px 4px rgba(0,0,0,.25); display: inline-flex; align-items: center; justify-content: center; padding: 0; vertical-align: middle; }
.btn-actions { width: 98px; height: 31px; background: #9c27b0; font-size: 12.500px; margin-top: -1px; }
.gear { width: 12px; height: 12px; fill: #fff; margin-right: 3px; }
.caret.small { border-width: 3px; border-bottom: 0; border-top-color: #fff; margin: 0 0 0 3px; }
.btn-apply { width: 67px; height: 35px; background: #c2185b; font-size: 14px; }
.btn-stats { width: 91px; height: 35px; background: #009688; font-size: 14px; }
.table-foot { margin-top: 256px; border-top: 2px solid #f3f3f3; padding: 9px 26px 0 16px; display: flex; justify-content: space-between; height: 60px; width: 1092px; }
.foot-left { display: flex; align-items: center; height: 27px; }
.show { font-size: 12.500px; color: #3b4272; }
.len { width: 62px; height: 27px; margin: 0 5px; background: #f2f3f4; border: 1px solid #ebebeb; border-radius: 3px; display: flex; align-items: center; justify-content: space-between; padding: 1px 15px 0 12px; font-size: 12.500px; color: #111; }
.len-arrow { width: 0; height: 0; border: 3.500px solid transparent; border-top: 5px solid #999; border-bottom: 0; }
.info { margin-left: 32px; font-size: 12.500px; color: #a3a3bc; letter-spacing: .15px; position: relative; top: 0; }
.pager { display: flex; align-items: center; height: 27px; gap: 10px; font-size: 12.500px; }
.pg { color: #a3a3bc; }
.pg-cur { width: 27px; height: 27px; background: #9c27b0; color: #fff; border-radius: 2px; display: flex; align-items: center; justify-content: center; box-shadow: 0 2px 3px rgba(0,0,0,.25); }
```
